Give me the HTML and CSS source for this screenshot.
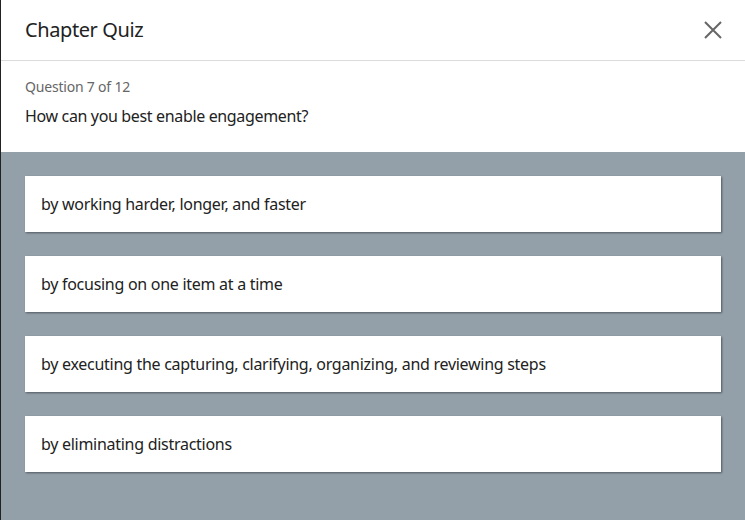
FILE: index.html
```html
<!DOCTYPE html>
<html>
<head>
<meta charset="utf-8">
<link rel="stylesheet" href="styles.css">
</head>
<body>
<div class="dialog">
  <header class="header">
    <h1 class="title">Chapter Quiz</h1>
    <button class="close" aria-label="Close">
      <svg width="18" height="18" viewBox="0 0 18 18"><path d="M1 1L17 17M17 1L1 17" stroke="#666" stroke-width="2" fill="none"/></svg>
    </button>
  </header>
  <section class="question">
    <div class="counter">Question 7 of 12</div>
    <div class="prompt">How can you best enable engagement?</div>
  </section>
  <section class="answers">
    <div class="answer">by working harder, longer, and faster</div>
    <div class="answer">by focusing on one item at a time</div>
    <div class="answer">by executing the capturing, clarifying, organizing, and reviewing steps</div>
    <div class="answer">by eliminating distractions</div>
  </section>
</div>
</body>
</html>
```
FILE: styles.css
```css
html, body {
  margin: 0;
  padding: 0;
  height: 100%;
}
body {
  font-family: "Noto Sans", "Open Sans", sans-serif;
  color: #222;
  background: #93a0aa;
  border-left: 1px solid #222;
  box-sizing: border-box;
}
.dialog {
  display: flex;
  flex-direction: column;
  height: 100%;
}
.header {
  display: flex;
  align-items: center;
  justify-content: space-between;
  height: 60px;
  padding: 0 23px 0 24px;
  background: #fff;
  border-bottom: 1px solid #dcdcdc;
}
.title {
  margin: 0;
  font-size: 20px;
  font-weight: 400;
  color: #222;
  letter-spacing: -0.4px;
  position: relative;
  top: -1px;
}
.close {
  border: 0;
  background: none;
  padding: 0;
  width: 18px;
  height: 18px;
  display: flex;
}
.question {
  background: #fff;
  padding: 16px 24px 25px;
  display: flex;
  flex-direction: column;
  gap: 8px;
}
.counter {
  font-size: 14px;
  color: #666;
  line-height: 20px;
  letter-spacing: -0.2px;
}
.prompt {
  font-size: 16px;
  line-height: 22px;
  color: #222;
  letter-spacing: -0.35px;
}
.answers {
  flex: 1;
  background: #93a0aa;
  padding: 24px 24px 0;
  display: flex;
  flex-direction: column;
  gap: 24px;
}
.answer {
  background: #fff;
  height: 56px;
  display: flex;
  align-items: center;
  padding: 0 16px;
  font-size: 16px;
  color: #222;
  letter-spacing: -0.28px;
  box-shadow: 1px 1px 2px rgba(0, 0, 0, 0.45);
}
```
